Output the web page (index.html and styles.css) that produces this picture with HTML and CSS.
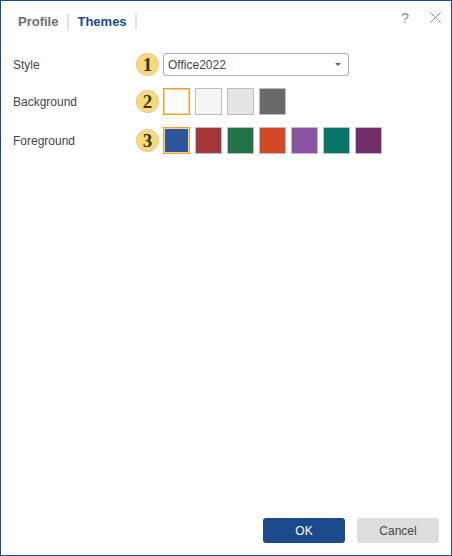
FILE: index.html
```html
<!DOCTYPE html>
<html lang="en">
<head>
<meta charset="utf-8">
<title>Themes</title>
<link rel="stylesheet" href="styles.css">
</head>
<body>
<div class="dialog">
  <header class="head">
    <nav class="tabs">
      <span class="tab">Profile</span>
      <span class="tab active">Themes</span>
    </nav>
    <div class="tools">
      <span class="help">?</span>
      <svg class="close" width="11" height="11" viewBox="0 0 11 11"><path d="M.3.3l10.4 10.4M10.7.3L.3 10.7" stroke="#8a8a8a" stroke-width="1" fill="none"/></svg>
    </div>
  </header>
  <main class="form">
    <div class="row row-style">
      <span class="label">Style</span>
      <span class="badge">1</span>
      <div class="select"><span>Office2022</span><i class="caret"></i></div>
    </div>
    <div class="row row-bg">
      <span class="label">Background</span>
      <span class="badge">2</span>
      <div class="swatches">
        <span class="swatch sel c-white"></span>
        <span class="swatch c-f5"></span>
        <span class="swatch c-e5"></span>
        <span class="swatch c-69"></span>
      </div>
    </div>
    <div class="row row-fg">
      <span class="label">Foreground</span>
      <span class="badge">3</span>
      <div class="swatches">
        <span class="swatch sel c-blue"></span>
        <span class="swatch c-red"></span>
        <span class="swatch c-green"></span>
        <span class="swatch c-orange"></span>
        <span class="swatch c-purple"></span>
        <span class="swatch c-teal"></span>
        <span class="swatch c-plum"></span>
      </div>
    </div>
  </main>
  <footer class="foot">
    <button class="btn primary">OK</button>
    <button class="btn">Cancel</button>
  </footer>
</div>
</body>
</html>
```
FILE: styles.css
```css
* { box-sizing: border-box; }
html, body { margin: 0; height: 100%; }
body { font-family: "Liberation Sans", Arial, sans-serif; background: #fff; color: #444; }
.dialog {
  width: 452px; height: 556px;
  border: 1px solid #1a4a8c;
  display: flex; flex-direction: column;
  background: #fff;
}
.head { display: flex; justify-content: space-between; height: 52px; padding: 12px 10px 0 17px; flex: none; }
.tabs { display: flex; height: 17px; }
.tab {
  font-size: 13px; font-weight: bold; color: #6f6f6f; line-height: 17px;
  padding-right: 9px; margin-right: 8px; border-right: 2px solid #e2e2e2;
}
.tab.active { color: #1a4a8c; padding-right: 8px; }
.tools { display: flex; gap: 21px; height: 16px; margin-top: -3px; }
.help { font-size: 14px; line-height: 16px; color: #8a8a8a; }
.close { margin-top: 2px; }
.form { flex: 1; display: flex; flex-direction: column; padding-left: 12px; }
.row { display: flex; align-items: center; }
.row-style { height: 23px; }
.row-bg { height: 27px; margin-top: 12px; }
.row-fg { height: 27px; margin-top: 12px; }
.label { width: 123px; font-size: 12px; line-height: 16px; color: #444; }
.badge {
  width: 23px; height: 23px; border-radius: 50%; flex: none;
  margin-right: 4px;
  background: radial-gradient(circle at 50% 50%, #f6d76c 0%, #f7da78 55%, #fbe0a0 85%, #fbd9a8 100%);
  border: 1px solid #f2b67c;
  font-family: "Liberation Serif", serif; font-weight: bold; font-size: 19px; line-height: 21px;
  text-align: center; color: #3a3226;
}
.select {
  width: 186px; height: 23px; border: 1px solid #aaa; border-radius: 3px;
  display: flex; align-items: center; justify-content: space-between;
  padding: 0 7px 0 4px; font-size: 12px; color: #444;
}
.caret { width: 0; height: 0; margin-top: -1px; border: 3px solid transparent; border-top: 3px solid #666; border-bottom: 0; }
.swatches { display: flex; gap: 5px; }
.swatch { width: 27px; height: 27px; border: 1px solid #bdbdbd; }
.swatch.sel { border-color: #f39c2e; box-shadow: inset 0 0 0 1px #fbd296; }
.c-white { background: #fff; }
.c-f5 { background: #f5f5f5; }
.c-e5 { background: #e5e5e5; }
.c-69 { background: #696969; }
.c-blue { background: #2b579a; }
.c-red { background: #a4373a; }
.c-green { background: #217346; }
.c-orange { background: #d24726; }
.c-purple { background: #8a54a2; }
.c-teal { background: #077568; }
.c-plum { background: #6f2d6a; }
.foot { flex: none; display: flex; justify-content: flex-end; gap: 12px; padding: 0 12px 12px 0; }
.btn {
  width: 82px; height: 25px; border: 0; border-radius: 3px;
  background: #dedede; color: #444;
  font-family: inherit; font-size: 12px; padding: 0;
}
.btn.primary { background: #1a4a8c; color: #fff; }
```
